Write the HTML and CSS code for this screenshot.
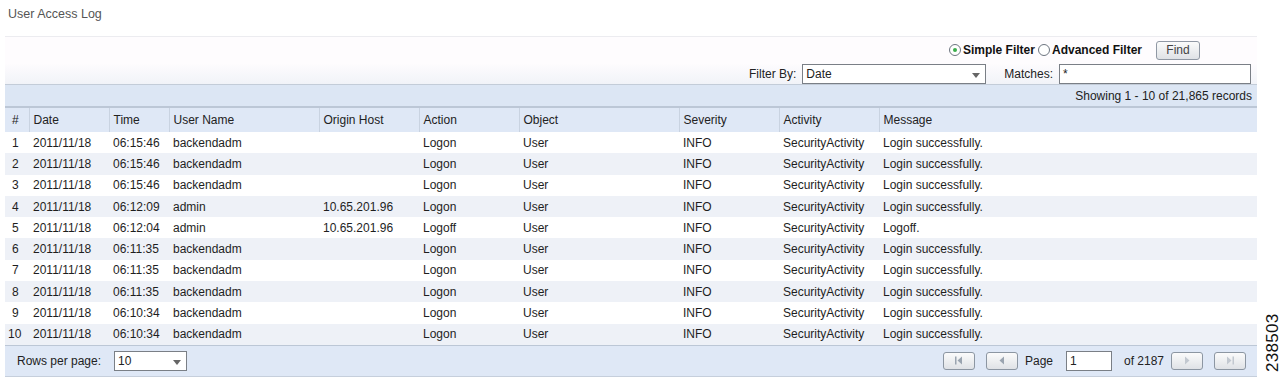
FILE: index.html
```html
<!DOCTYPE html>
<html>
<head>
<meta charset="utf-8">
<link rel="stylesheet" href="styles.css">
</head>
<body>
<div class="title">User Access Log</div>
<div class="panel">
  <div class="filters">
    <div class="frow frow1">
      <span class="radio on"></span><span class="rlabel">Simple Filter</span>
      <span class="radio"></span><span class="rlabel">Advanced Filter</span>
      <span class="btn find">Find</span>
    </div>
    <div class="frow frow2">
      <span class="flabel">Filter By:</span>
      <span class="select wide">Date<span class="caret"></span></span>
      <span class="flabel matches">Matches:</span>
      <span class="input wide2">*</span>
    </div>
  </div>
  <div class="showing">Showing 1 - 10 of 21,865 records</div>
  <table class="grid">
    <colgroup>
      <col class="c-num"><col class="c-date"><col class="c-time"><col class="c-user"><col class="c-host"><col class="c-act"><col class="c-obj"><col class="c-sev"><col class="c-actv"><col>
    </colgroup>
    <thead>
      <tr><th>#</th><th>Date</th><th>Time</th><th>User Name</th><th>Origin Host</th><th>Action</th><th>Object</th><th>Severity</th><th>Activity</th><th>Message</th></tr>
    </thead>
    <tbody>
      <tr><td>1</td><td>2011/11/18</td><td>06:15:46</td><td>backendadm</td><td></td><td>Logon</td><td>User</td><td>INFO</td><td>SecurityActivity</td><td>Login successfully.</td></tr>
      <tr><td>2</td><td>2011/11/18</td><td>06:15:46</td><td>backendadm</td><td></td><td>Logon</td><td>User</td><td>INFO</td><td>SecurityActivity</td><td>Login successfully.</td></tr>
      <tr><td>3</td><td>2011/11/18</td><td>06:15:46</td><td>backendadm</td><td></td><td>Logon</td><td>User</td><td>INFO</td><td>SecurityActivity</td><td>Login successfully.</td></tr>
      <tr><td>4</td><td>2011/11/18</td><td>06:12:09</td><td>admin</td><td>10.65.201.96</td><td>Logon</td><td>User</td><td>INFO</td><td>SecurityActivity</td><td>Login successfully.</td></tr>
      <tr><td>5</td><td>2011/11/18</td><td>06:12:04</td><td>admin</td><td>10.65.201.96</td><td>Logoff</td><td>User</td><td>INFO</td><td>SecurityActivity</td><td>Logoff.</td></tr>
      <tr><td>6</td><td>2011/11/18</td><td>06:11:35</td><td>backendadm</td><td></td><td>Logon</td><td>User</td><td>INFO</td><td>SecurityActivity</td><td>Login successfully.</td></tr>
      <tr><td>7</td><td>2011/11/18</td><td>06:11:35</td><td>backendadm</td><td></td><td>Logon</td><td>User</td><td>INFO</td><td>SecurityActivity</td><td>Login successfully.</td></tr>
      <tr><td>8</td><td>2011/11/18</td><td>06:11:35</td><td>backendadm</td><td></td><td>Logon</td><td>User</td><td>INFO</td><td>SecurityActivity</td><td>Login successfully.</td></tr>
      <tr><td>9</td><td>2011/11/18</td><td>06:10:34</td><td>backendadm</td><td></td><td>Logon</td><td>User</td><td>INFO</td><td>SecurityActivity</td><td>Login successfully.</td></tr>
      <tr><td class="n10">10</td><td>2011/11/18</td><td>06:10:34</td><td>backendadm</td><td></td><td>Logon</td><td>User</td><td>INFO</td><td>SecurityActivity</td><td>Login successfully.</td></tr>
    </tbody>
  </table>
  <div class="footer">
    <div class="rpp">
      <span class="flabel">Rows per page:</span>
      <span class="select small">10<span class="caret"></span></span>
    </div>
    <div class="pager">
      <span class="btn pbtn first"><svg width="10" height="9" viewBox="0 0 10 9"><rect x="1" y="0.5" width="1.5" height="8" fill="#9aa4b0"/><path d="M8 0.5 L3.5 4.5 L8 8.5 Z" fill="#9aa4b0"/></svg></span>
      <span class="btn pbtn prev"><svg width="10" height="9" viewBox="0 0 10 9"><path d="M7 0.5 L2.5 4.5 L7 8.5 Z" fill="#9aa4b0"/></svg></span>
      <span class="plabel">Page</span>
      <span class="input pageinput">1</span>
      <span class="plabel of">of 2187</span>
      <span class="btn pbtn next"><svg width="10" height="9" viewBox="0 0 10 9"><path d="M3 0.5 L7.5 4.5 L3 8.5 Z" fill="#c2c8d0"/></svg></span>
      <span class="btn pbtn last"><svg width="10" height="9" viewBox="0 0 10 9"><path d="M2 0.5 L6.5 4.5 L2 8.5 Z" fill="#c2c8d0"/><rect x="7.5" y="0.5" width="1.5" height="8" fill="#c2c8d0"/></svg></span>
    </div>
  </div>
</div>
<div class="figid">238503</div>
</body>
</html>
```
FILE: styles.css
```css
* { box-sizing: border-box; }
html, body { margin: 0; padding: 0; background: #fff; }
body {
  font-family: "Liberation Sans", Arial, sans-serif;
  font-size: 12px;
  color: #222;
  width: 1282px;
  height: 381px;
  position: relative;
  overflow: hidden;
}
.title {
  width: 1252px;
  margin-left: 5px;
  height: 37px;
  padding: 7px 0 0 3px;
  color: #555;
  font-size: 12.5px;
  border-bottom: 1px solid #ececf0;
}
.panel {
  width: 1252px;
  margin-left: 5px;
}
.filters {
  height: 47px;
  background: linear-gradient(#fefcfe 0, #fefcfe 26px, #f1f3f8 47px);
}
.frow {
  display: flex;
  align-items: center;
  justify-content: flex-end;
}
.frow1 {
  height: 26px;
  padding-right: 57px;
  font-family: "Liberation Sans Narrow", "Liberation Sans", Arial, sans-serif;
}
.frow2 {
  height: 21px;
  padding-right: 6px;
}
.radio {
  width: 12px;
  height: 12px;
  border: 1px solid #6d7580;
  border-radius: 50%;
  background: #fff;
  position: relative;
  margin-right: 2px;
}
.radio.on::after {
  content: "";
  position: absolute;
  left: 3px; top: 3px;
  width: 4px; height: 4px;
  border-radius: 50%;
  background: #3cae4c;
}
.rlabel {
  font-weight: bold;
  color: #111;
  margin-right: 2px;
}
.rlabel + .radio { margin-left: 1px; }
.btn {
  display: inline-flex;
  align-items: center;
  justify-content: center;
  border: 1px solid #9098a4;
  border-radius: 3px;
  background: linear-gradient(#fbfbfb, #dfe2e6);
  color: #333;
}
.find {
  width: 44px;
  height: 19px;
  margin-left: 12px;
  font-family: "Liberation Sans", Arial, sans-serif;
  color: #444;
}
.flabel { color: #222; }
.select, .input {
  height: 20px;
  border: 1px solid #7a7f86;
  background: #fff;
  padding-left: 3px;
  display: inline-flex;
  align-items: center;
  position: relative;
}
.wide { width: 184px; margin-left: 6px; }
.matches { margin-left: 18px; }
.wide2 { width: 192px; margin-left: 6px; }
.caret {
  position: absolute;
  right: 5px;
  top: 8px;
  border-left: 4px solid transparent;
  border-right: 4px solid transparent;
  border-top: 5px solid #666;
}
.showing {
  height: 24px;
  border-top: 1px solid #c3ccd8;
  border-bottom: 2px solid #bcc7d6;
  background: #dce6f4;
  text-align: right;
  padding: 4px 5px 0 0;
  color: #222;
}
.grid {
  width: 1252px;
  border-collapse: collapse;
  table-layout: fixed;
}
.c-num { width: 24px; }
.c-date { width: 80px; }
.c-time { width: 60px; }
.c-user { width: 150px; }
.c-host { width: 100px; }
.c-act { width: 100px; }
.c-obj { width: 160px; }
.c-sev { width: 100px; }
.c-actv { width: 100px; }
.grid th {
  height: 24px;
  background: #dfe8f6;
  font-weight: normal;
  text-align: left;
  padding: 0 0 0 4px;
  border-left: 1px solid #c9d3e1;
  color: #222;
}
.grid th:first-child { border-left: none; padding-left: 7px; }
.grid td {
  height: 21.3px;
  padding: 0 0 0 4px;
  white-space: nowrap;
  overflow: hidden;
  color: #1e1e1e;
}
.grid td:first-child { padding-left: 7px; }
.grid td.n10 { padding-left: 3px; }
.grid tbody tr:nth-child(even) td { background: #eef1f7; }
.grid tbody tr:nth-child(odd) td { background: #fff; }
.footer {
  height: 32px;
  border-top: 1px solid #bcc7d6;
  border-bottom: 1px solid #c6cfdc;
  background: #dfe8f6;
  display: flex;
  align-items: center;
  justify-content: space-between;
}
.rpp {
  display: flex;
  align-items: center;
  padding-left: 12px;
}
.small { width: 73px; margin-left: 13px; }
.pager {
  display: flex;
  align-items: center;
  padding-right: 11px;
}
.pbtn {
  width: 32px;
  height: 18px;
  border-color: #8c96a2;
}
.prev { margin-left: 11px; }
.plabel { margin-left: 7px; }
.pageinput { width: 46px; margin-left: 13px; }
.of { margin-left: 12px; width: 47px; }
.last { margin-left: 11px; }
.figid {
  position: absolute;
  left: 1263px;
  top: 372px;
  font-size: 17px;
  color: #111;
  transform-origin: 0 0;
  transform: rotate(-90deg);
  letter-spacing: 0.3px;
}
```
